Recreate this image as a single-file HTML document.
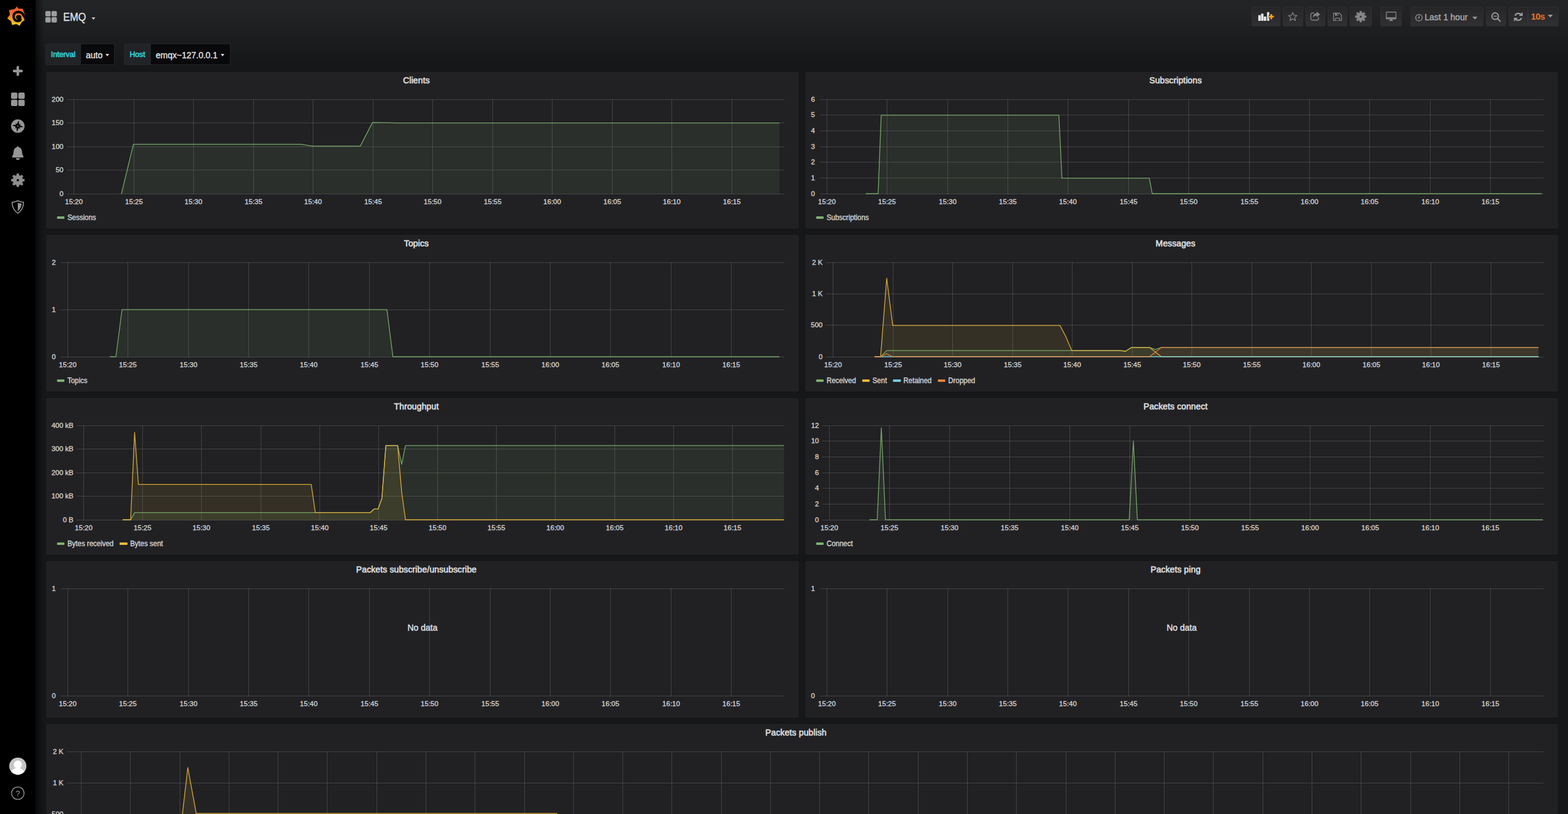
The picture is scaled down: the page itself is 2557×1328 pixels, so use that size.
<!DOCTYPE html>
<html lang="en"><head><meta charset="utf-8"><title>Grafana - EMQ</title>
<style>
*{box-sizing:border-box}
html,body{margin:0;padding:0}
body{width:2557px;height:1328px;overflow:hidden;position:relative;background:#161719;background-image:linear-gradient(180deg,#232426 0px,#222426 8px,#161719 105px);background-repeat:no-repeat;font-family:"Liberation Sans",sans-serif;color:#d8d9da;font-size:13px}
.sidemenu{position:absolute;left:0;top:0;width:58px;height:1328px;background:#000}
.sidemenu svg{position:absolute}
.shadow{position:absolute;left:58px;top:0;width:14px;height:1328px;background:linear-gradient(90deg,rgba(0,0,0,.55),rgba(0,0,0,0))}
.navt{-webkit-text-stroke:.3px #e3e3e3;position:absolute;left:103px;top:14.5px;font-size:18px;line-height:26px;color:#e3e3e3;transform:scaleX(.91);transform-origin:0 0;white-space:nowrap}
.nbtn{position:absolute;top:11px;height:32px;border:1px solid #2f2f32;border-radius:2px;background:linear-gradient(180deg,#262628,#303032);color:#9a9a9a}
.nbtn svg{position:absolute}
.nbtn span{position:absolute;white-space:nowrap;font-size:14px;line-height:16px}
.vlab{position:absolute;top:71px;height:35px;padding-top:1px;background:#212327;box-shadow:inset 0 0 0 1px #26272b;border-radius:3px 0 0 3px;color:#32d1df;-webkit-text-stroke:.6px #32d1df;font-size:12.5px;line-height:35px;letter-spacing:-.15px;text-align:center;white-space:nowrap}
.vval{-webkit-text-stroke:.35px #e3e3e3;position:absolute;top:71px;height:35px;padding-top:1px;background:#09090b;border:1px solid #262628;border-left-width:0;border-radius:0 3px 3px 0;color:#e3e3e3;font-size:14px;line-height:35px;padding-left:8px;white-space:nowrap}
.caret{display:inline-block;width:0;height:0;border-left:3.8px solid transparent;border-right:3.8px solid transparent;border-top:4px solid #d8d9da;vertical-align:middle;margin-left:5px;position:relative;top:-1px}
.panel{position:absolute;background:#212124;border-radius:2px;overflow:hidden;box-shadow:0 0 0 1px #131314}
.ptitle{position:absolute;top:5.6px;transform:translateX(-50%);font-size:14px;line-height:16px;color:#dcdddf;-webkit-text-stroke:.65px #dcdddf;letter-spacing:.12px;white-space:nowrap}
.chart{position:absolute;left:0;top:0}
.grid{stroke:rgba(200,200,200,.2);stroke-width:1;fill:none}
.ax text{font-family:"Liberation Sans",sans-serif;font-size:11.5px;fill:#d8d9da;stroke:#d8d9da;stroke-width:.3px}
.nodata{font-family:"Liberation Sans",sans-serif;font-size:14px;fill:#dedfe0;stroke:#dedfe0;stroke-width:.45px}
.legend{position:absolute;left:18px;top:229.5px;height:16px;white-space:nowrap;font-size:12.4px;-webkit-text-stroke:.33px #d8d9da;line-height:16px;color:#d8d9da;transform:scaleX(.927);transform-origin:0 0}
.li{display:inline-block;margin-right:10.8px}
.li i{display:inline-block;width:13.4px;height:3.4px;border-radius:1px;vertical-align:middle;margin-right:4.85px;position:relative;top:-.4px}

</style></head>
<body>
<div class="sidemenu">
<svg style="left:5px;top:5px" width="48" height="45" viewBox="0 0 1417 1328"><defs><linearGradient id="lg" x1="0" y1="170" x2="0" y2="1095" gradientUnits="userSpaceOnUse"><stop offset="0" stop-color="#f05a28"/><stop offset=".35" stop-color="#f26a2c"/><stop offset="1" stop-color="#fdd420"/></linearGradient></defs>
<path fill="url(#lg)" d="M660 172L748 272L938 266Q1010 420 1058 600L990 640L1000 720L1038 822L880 940L800 1092L640 1012L428 1052L392 880L198 740L330 560L284 338L560 290Z"/>
<ellipse cx="752" cy="688" rx="127" ry="113" fill="#000"/>
<path fill="none" stroke="#000" stroke-width="116" d="M815 750C880 815 800 862 700 862C570 860 505 750 508 630C512 500 610 428 740 428C870 428 955 505 990 612L1070 690"/>
</svg>
<svg style="left:18px;top:105px" width="22" height="22" viewBox="18 105 22 22"><path fill="none" stroke="#969696" stroke-width="4.2" stroke-linecap="round" d="M22.9 115.85H35.2M29.05 109.7V122"/></svg>
<svg style="left:17px;top:150px" width="24" height="24" viewBox="17 150 24 24"><g fill="#969696"><rect x="18" y="151" width="10.4" height="10.3" rx="2.2"/><rect x="29.9" y="151" width="10.4" height="10.3" rx="2.2"/><rect x="18" y="162.7" width="10.4" height="10.3" rx="2.2"/><rect x="29.9" y="162.7" width="10.4" height="10.3" rx="2.2"/></g></svg>
<svg style="left:17px;top:194px" width="24" height="24" viewBox="17 194 24 24"><circle cx="29.05" cy="205.7" r="11" fill="#969696"/><polygon fill="#000" points="30.39,196.19 31.37,203.95 38.56,207.04 30.80,208.02 27.71,215.21 26.73,207.45 19.54,204.36 27.30,203.38"/><polygon fill="#000" points="34.08,201.91 31.03,205.98 32.84,210.73 28.77,207.68 24.02,209.49 27.07,205.42 25.26,200.67 29.33,203.72"/><circle cx="29.05" cy="205.7" r="1" fill="#969696"/></svg>
<svg style="left:18px;top:237px" width="22" height="26" viewBox="18 237 22 26"><path fill="#969696" d="M29.05 238.700C30 238.700 30.400 239.300 30.500 240.100C33.600 240.900 35.600 243.500 35.900 247.100C36.100 250.500 36.300 252.500 37.900 254.300C38.500 255 38.300 256.900 37.200 256.900H20.900C19.800 256.900 19.600 255 20.200 254.300C21.800 252.500 22 250.500 22.200 247.100C22.500 243.500 24.500 240.900 27.600 240.100C27.700 239.300 28.100 238.700 29.050 238.700ZM25.800 258.100h6.500c0 1.700-1.400 2.900-3.250 2.900s-3.250-1.200-3.250-2.900z"/></svg>
<svg style="left:17px;top:282px" width="24" height="24" viewBox="17 282 24 24"><path fill="#8e8e8e" fill-rule="evenodd" stroke="#8e8e8e" stroke-width=".8" stroke-linejoin="round" d="M27.15 286.33L27.48 283.42L30.62 283.42L30.95 286.33L33.12 287.23L35.42 285.41L37.64 287.63L35.82 289.93L36.72 292.10L39.63 292.43L39.63 295.57L36.72 295.90L35.82 298.07L37.64 300.37L35.42 302.59L33.12 300.77L30.95 301.67L30.62 304.58L27.48 304.58L27.15 301.67L24.98 300.77L22.68 302.59L20.46 300.37L22.28 298.07L21.38 295.90L18.47 295.57L18.47 292.43L21.38 292.10L22.28 289.93L20.46 287.63L22.68 285.41L24.98 287.23ZM26.75 294.00a2.30 2.30 0 1 0 4.60 0a2.30 2.30 0 1 0 -4.60 0Z"/></svg>
<svg style="left:17px;top:325px" width="24" height="26" viewBox="17 325 24 26"><path fill="none" stroke="#969696" stroke-width="1.5" stroke-linejoin="round" d="M29.05 327.5c-3 1.500-6.200 2.300-9.400 2.500c.2 8 3.800 14.200 9.400 17.900c5.600-3.700 9.200-9.900 9.400-17.900c-3.200-.2-6.400-1-9.400-2.500z"/><path fill="#969696" d="M29.05 330.800c2 .8 4.100 1.300 6.300 1.500c-.5 5.300-2.700 9.500-6.300 12.500z"/></svg>
<svg style="left:14px;top:1235px" width="30" height="30" viewBox="14 1235 30 30"><defs><clipPath id="av"><circle cx="29.05" cy="1249.9" r="14"/></clipPath></defs><circle cx="29.05" cy="1249.900" r="14" fill="#c6c6c6"/><g clip-path="url(#av)" fill="#fff"><circle cx="29.050" cy="1247.300" r="6.600"/><ellipse cx="29.05" cy="1263" rx="11.5" ry="10.2"/></g></svg>
<svg style="left:17px;top:1282px" width="24" height="24" viewBox="17 1282 24 24"><circle cx="29.05" cy="1294" r="10.2" fill="none" stroke="#969696" stroke-width="1.300"/><text x="29.05" y="1298.700" text-anchor="middle" font-family="Liberation Sans, sans-serif" font-size="13.500" fill="#969696">?</text></svg>
</div>
<div class="shadow"></div>
<svg style="position:absolute;left:74px;top:18px" width="19" height="19" viewBox="0 0 19 19"><g fill="#9d9d9d"><rect x="0" y="0" width="8.7" height="8.700" rx="1.800"/><rect x="10" y="0" width="8.700" height="8.700" rx="1.800"/><rect x="0" y="10" width="8.700" height="8.700" rx="1.800"/><rect x="10" y="10" width="8.700" height="8.700" rx="1.800"/></g></svg>
<div class="navt">EMQ</div>
<svg style="position:absolute;left:149px;top:28px" width="7" height="5" viewBox="0 0 7 5"><path fill="#d8d9da" d="M.3.600h6.200L3.400 4.100z"/></svg>
<div class="vlab" style="left:74px;width:58px">Interval</div><div class="vval" style="left:132px;width:54.500px">auto<i class="caret"></i></div>
<div class="vlab" style="left:202px;width:44px">Host</div><div class="vval" style="left:246px;width:129.500px">emqx~127.0.0.1<i class="caret"></i></div>
<div class="nbtn" style="left:2041px;width:47px"><svg style="left:-1px;top:-1px" width="47" height="32" viewBox="2041 11 47 32"><g fill="#e6e6e6"><rect x="2051.900" y="24.800" width="4" height="9.100" rx=".5"/><rect x="2056.400" y="22.200" width="4" height="11.700" rx=".5"/><rect x="2060.900" y="26.900" width="4" height="7" rx=".5"/><rect x="2066.200" y="19.700" width="3.700" height="14.200" rx=".5"/></g><path fill="none" stroke="#262628" stroke-width="4.800" d="M2068.700 27.200h8.800M2073.100 22.800v8.800"/><path fill="none" stroke="#f6a01a" stroke-width="2.800" d="M2068.900 27.200h8.400M2073.100 23v8.400"/></svg></div>
<div class="nbtn" style="left:2092px;width:33px"><svg style="left:-1px;top:-1px" width="33" height="32" viewBox="2092 11 33 32"><polygon fill="none" stroke="#858585" stroke-width="1.250" stroke-linejoin="round" points="2108.10,20.30 2110.04,24.93 2115.04,25.34 2111.24,28.62 2112.39,33.51 2108.10,30.90 2103.81,33.51 2104.96,28.62 2101.16,25.34 2106.16,24.93"/></svg></div>
<div class="nbtn" style="left:2129px;width:32px"><svg style="left:-1px;top:-1px" width="32" height="32" viewBox="2129 11 32 32"><path fill="none" stroke="#858585" stroke-width="1.400" stroke-linecap="round" d="M2142.500 21.300h-2.300a2.600 2.600 0 0 0-2.600 2.600v6.300a2.600 2.600 0 0 0 2.600 2.600h7.300a2.600 2.600 0 0 0 2.600-2.600v-2"/><path fill="#858585" d="M2147.200 19l5.600 4.500l-5.600 4.500v-2.600c-3.300 0-5 1.200-6 3.800c-.3-4.300 1.700-7.300 6-7.600z"/></svg></div>
<div class="nbtn" style="left:2165px;width:32px"><svg style="left:-1px;top:-1px" width="32" height="32" viewBox="2165 11 32 32"><path fill="none" stroke="#858585" stroke-width="1.300" stroke-linejoin="round" d="M2174.700 21.300h9.300l3.500 3.500v8.600h-12.800z"/><path fill="#858585" d="M2177 21.300h5.600v4.300h-5.600zM2177.300 29h7.600v4.400h-7.600z"/><rect x="2180.400" y="22" width="1.400" height="2.800" fill="#2b2b2d"/><rect x="2178.500" y="30.200" width="5.200" height="3.200" fill="#2b2b2d"/></svg></div>
<div class="nbtn" style="left:2201px;width:36px"><svg style="left:-1px;top:-1px" width="36" height="32" viewBox="2201 11 36 32"><path fill="#858585" fill-rule="evenodd" stroke="#858585" stroke-width=".8" stroke-linejoin="round" d="M2217.43 20.84L2217.69 18.35L2220.31 18.35L2220.57 20.84L2222.35 21.58L2224.30 20.00L2226.15 21.85L2224.57 23.80L2225.31 25.58L2227.80 25.84L2227.80 28.46L2225.31 28.72L2224.57 30.50L2226.15 32.45L2224.30 34.30L2222.35 32.72L2220.57 33.46L2220.31 35.95L2217.69 35.95L2217.43 33.46L2215.65 32.72L2213.70 34.30L2211.85 32.45L2213.43 30.50L2212.69 28.72L2210.20 28.46L2210.20 25.84L2212.69 25.58L2213.43 23.80L2211.85 21.85L2213.70 20.00L2215.65 21.58ZM2217.10 27.15a1.90 1.90 0 1 0 3.80 0a1.90 1.90 0 1 0 -3.80 0Z"/></svg></div>
<div class="nbtn" style="left:2251px;width:35px"><svg style="left:-1px;top:-1px" width="35" height="32" viewBox="2251 11 35 32"><path fill="#858585" fill-rule="evenodd" d="M2261.500 19h14.100a1.500 1.500 0 0 1 1.500 1.500v9.600a1.500 1.500 0 0 1-1.500 1.500h-14.100a1.500 1.500 0 0 1-1.500-1.500v-9.600a1.500 1.500 0 0 1 1.500-1.500zM2261.300 20.400v7.900h14.500v-7.900zM2266.800 31.600h3.600l.6 1.700h1v.9h-6.800v-.9h1z"/></svg></div>
<div class="nbtn" style="left:2300px;width:119px"><svg style="left:-1px;top:-1px" width="119" height="32" viewBox="2300 11 119 32"><circle cx="2313.900" cy="28.900" r="5.300" fill="none" stroke="#9a9a9a" stroke-width="1.300"/><path fill="none" stroke="#9a9a9a" stroke-width="1.200" d="M2314.300 25.500v3.800h-2.700"/><text x="2323.300" y="33.100" font-family="Liberation Sans, sans-serif" font-size="14" fill="#abadb0" stroke="#abadb0" stroke-width=".35">Last 1 hour</text><path fill="#9a9a9a" d="M2401 27.300h8.400l-4.200 4.500z"/></svg></div>
<div class="nbtn" style="left:2423px;width:33px"><svg style="left:-1px;top:-1px" width="33" height="32" viewBox="2423 11 33 32"><circle cx="2438.200" cy="26.400" r="5.300" fill="none" stroke="#9a9a9a" stroke-width="2"/><path fill="none" stroke="#9a9a9a" stroke-width="2.200" stroke-linecap="round" d="M2442.300 30.500l4 4"/><path stroke="#9a9a9a" stroke-width="1.400" d="M2435.600 26.400h5.200"/></svg></div>
<div class="nbtn" style="left:2460px;width:82px"><svg style="left:-1px;top:-1px" width="82" height="32" viewBox="2460 11 82 32"><path fill="none" stroke="#9a9a9a" stroke-width="2.300" d="M2470.74 25.58A5.6 5.6 0 0 1 2481.08 25.13M2481.26 29.42A5.6 5.6 0 0 1 2470.92 29.87"/><path fill="#9a9a9a" d="M2483.100 19.800v6.300h-6.300zM2468.900 35.200v-6.300h6.300z"/><path stroke="#39393b" stroke-width="1" d="M2491.500 11v32"/><text x="2496.400" y="32.200" font-family="Liberation Sans, sans-serif" font-size="14.500" font-weight="bold" letter-spacing="-.5" fill="#ec7220">10s</text><path fill="#9a9a9a" d="M2524 24.100h8.200l-4.100 4.300z"/></svg></div>
<div class="panel" style="left:75px;top:117px;width:1228px;height:256px">
<div class="ptitle" style="left:604px">Clients</div>
<svg class="chart" width="1228" height="256" viewBox="75 117 1228 256">
<path class="grid" d="M109 316.5H1279M109 277.5H1279M109 239.5H1279M109 200.5H1279M109 162.5H1279M120.5 162V317M218.5 162V317M315.5 162V317M413.5 162V317M510.5 162V317M608.5 162V317M705.5 162V317M803.5 162V317M900.5 162V317M998.5 162V317M1095.5 162V317M1193.5 162V317"/>
<polygon fill="#7eb26d" fill-opacity=".1" points="198.00,316.50 217.50,235.40 490.50,235.40 510.00,238.40 587.50,238.40 607.50,199.90 628.00,200.20 647.50,200.70 1271.00,200.70 1271.00,316.50 198.00,316.50"/>
<polyline fill="none" stroke="#7eb26d" stroke-width="1.3" stroke-opacity=".9" stroke-linejoin="round" points="198.00,316.50 217.50,235.40 490.50,235.40 510.00,238.40 587.50,238.40 607.50,199.90 628.00,200.20 647.50,200.70 1271.00,200.70"/>
<g class="ax" text-anchor="end">
<text x="103.5" y="319.5">0</text>
<text x="103.5" y="281">50</text>
<text x="103.5" y="242.5">100</text>
<text x="103.5" y="204">150</text>
<text x="103.5" y="165.5">200</text>
</g>
<g class="ax" text-anchor="middle">
<text x="120.5" y="332.5">15:20</text>
<text x="218.5" y="332.5">15:25</text>
<text x="315.5" y="332.5">15:30</text>
<text x="413.5" y="332.5">15:35</text>
<text x="510.5" y="332.5">15:40</text>
<text x="608.5" y="332.5">15:45</text>
<text x="705.5" y="332.5">15:50</text>
<text x="803.5" y="332.5">15:55</text>
<text x="900.5" y="332.5">16:00</text>
<text x="998.5" y="332.5">16:05</text>
<text x="1095.5" y="332.5">16:10</text>
<text x="1193.5" y="332.5">16:15</text>
</g>
</svg>
<div class="legend"><span class="li"><i style="background:#7eb26d"></i>Sessions</span></div>
</div>
<div class="panel" style="left:1313px;top:117px;width:1228px;height:256px">
<div class="ptitle" style="left:604px">Subscriptions</div>
<svg class="chart" width="1228" height="256" viewBox="1313 117 1228 256">
<path class="grid" d="M1337 316.5H2517M1337 290.5H2517M1337 264.5H2517M1337 239.5H2517M1337 213.5H2517M1337 187.5H2517M1337 162.5H2517M1348.5 162V317M1446.5 162V317M1545.5 162V317M1643.5 162V317M1741.5 162V317M1840.5 162V317M1938.5 162V317M2037.5 162V317M2135.5 162V317M2233.5 162V317M2332.5 162V317M2430.5 162V317"/>
<polygon fill="#7eb26d" fill-opacity=".1" points="1412.00,316.00 1432.00,316.00 1437.00,187.90 1726.75,187.90 1731.75,290.60 1874.25,290.60 1879.00,316.00 2514.00,316.00 2514.00,316.50 1412.00,316.50"/>
<polyline fill="none" stroke="#7eb26d" stroke-width="1.3" stroke-opacity=".9" stroke-linejoin="round" points="1412.00,316.00 1432.00,316.00 1437.00,187.90 1726.75,187.90 1731.75,290.60 1874.25,290.60 1879.00,316.00 2514.00,316.00"/>
<g class="ax" text-anchor="end">
<text x="1328.9" y="319.5">0</text>
<text x="1328.9" y="293.833">1</text>
<text x="1328.9" y="268.167">2</text>
<text x="1328.9" y="242.5">3</text>
<text x="1328.9" y="216.833">4</text>
<text x="1328.9" y="191.167">5</text>
<text x="1328.9" y="165.5">6</text>
</g>
<g class="ax" text-anchor="middle">
<text x="1348.5" y="332.5">15:20</text>
<text x="1446.5" y="332.5">15:25</text>
<text x="1545.5" y="332.5">15:30</text>
<text x="1643.5" y="332.5">15:35</text>
<text x="1741.5" y="332.5">15:40</text>
<text x="1840.5" y="332.5">15:45</text>
<text x="1938.5" y="332.5">15:50</text>
<text x="2037.5" y="332.5">15:55</text>
<text x="2135.5" y="332.5">16:00</text>
<text x="2233.5" y="332.5">16:05</text>
<text x="2332.5" y="332.5">16:10</text>
<text x="2430.5" y="332.5">16:15</text>
</g>
</svg>
<div class="legend"><span class="li"><i style="background:#7eb26d"></i>Subscriptions</span></div>
</div>
<div class="panel" style="left:75px;top:383px;width:1228px;height:256px">
<div class="ptitle" style="left:604px">Topics</div>
<svg class="chart" width="1228" height="256" viewBox="75 383 1228 256">
<path class="grid" d="M99 582.5H1279M99 505.5H1279M99 428.5H1279M110.5 428V583M208.5 428V583M307.5 428V583M405.5 428V583M503.5 428V583M602.5 428V583M700.5 428V583M799.5 428V583M897.5 428V583M995.5 428V583M1094.5 428V583M1192.5 428V583"/>
<polygon fill="#7eb26d" fill-opacity=".1" points="179.00,582.00 189.00,582.00 199.00,505.20 631.00,505.20 640.75,582.00 1271.00,582.00 1271.00,582.50 179.00,582.50"/>
<polyline fill="none" stroke="#7eb26d" stroke-width="1.3" stroke-opacity=".9" stroke-linejoin="round" points="179.00,582.00 189.00,582.00 199.00,505.20 631.00,505.20 640.75,582.00 1271.00,582.00"/>
<g class="ax" text-anchor="end">
<text x="90.9" y="585.5">0</text>
<text x="90.9" y="508.5">1</text>
<text x="90.9" y="431.5">2</text>
</g>
<g class="ax" text-anchor="middle">
<text x="110.5" y="598.5">15:20</text>
<text x="208.5" y="598.5">15:25</text>
<text x="307.5" y="598.5">15:30</text>
<text x="405.5" y="598.5">15:35</text>
<text x="503.5" y="598.5">15:40</text>
<text x="602.5" y="598.5">15:45</text>
<text x="700.5" y="598.5">15:50</text>
<text x="799.5" y="598.5">15:55</text>
<text x="897.5" y="598.5">16:00</text>
<text x="995.5" y="598.5">16:05</text>
<text x="1094.5" y="598.5">16:10</text>
<text x="1192.5" y="598.5">16:15</text>
</g>
</svg>
<div class="legend"><span class="li"><i style="background:#7eb26d"></i>Topics</span></div>
</div>
<div class="panel" style="left:1313px;top:383px;width:1228px;height:256px">
<div class="ptitle" style="left:604px">Messages</div>
<svg class="chart" width="1228" height="256" viewBox="1313 383 1228 256">
<path class="grid" d="M1347 582.5H2517M1347 530.5H2517M1347 479.5H2517M1347 428.5H2517M1358.5 428V583M1456.5 428V583M1553.5 428V583M1651.5 428V583M1748.5 428V583M1846.5 428V583M1943.5 428V583M2041.5 428V583M2138.5 428V583M2236.5 428V583M2333.5 428V583M2431.5 428V583"/>
<polygon fill="#7eb26d" fill-opacity=".1" points="1426.00,582.00 1436.00,582.00 1446.00,571.90 1826.00,571.90 1835.50,573.00 1845.25,566.80 1874.50,566.80 1884.00,570.20 1894.00,566.80 2509.00,566.80 2509.00,582.50 1426.00,582.50"/>
<polygon fill="#eab839" fill-opacity=".1" points="1426.00,582.00 1436.00,582.00 1446.00,454.00 1455.75,530.90 1728.50,530.90 1738.00,549.00 1747.75,571.90 1826.00,571.90 1835.50,573.00 1845.25,566.80 1874.50,566.80 1894.00,582.00 2509.00,582.00 2509.00,582.50 1426.00,582.50"/>
<polygon fill="#6ed0e0" fill-opacity=".1" points="1426.00,582.00 2509.00,582.00 2509.00,582.50 1426.00,582.50"/>
<polygon fill="#ef843c" fill-opacity=".1" points="1426.00,582.00 1436.00,582.00 1446.00,577.00 1455.75,582.00 1874.50,582.00 1894.00,566.80 2509.00,566.80 2509.00,582.50 1426.00,582.50"/>
<polyline fill="none" stroke="#7eb26d" stroke-width="1.3" stroke-opacity=".9" stroke-linejoin="round" points="1426.00,582.00 1436.00,582.00 1446.00,571.90 1826.00,571.90 1835.50,573.00 1845.25,566.80 1874.50,566.80 1884.00,570.20 1894.00,566.80 2509.00,566.80"/>
<polyline fill="none" stroke="#eab839" stroke-width="1.3" stroke-opacity=".9" stroke-linejoin="round" points="1426.00,582.00 1436.00,582.00 1446.00,454.00 1455.75,530.90 1728.50,530.90 1738.00,549.00 1747.75,571.90 1826.00,571.90 1835.50,573.00 1845.25,566.80 1874.50,566.80 1894.00,582.00 2509.00,582.00"/>
<polyline fill="none" stroke="#6ed0e0" stroke-width="1.3" stroke-opacity=".9" stroke-linejoin="round" points="1426.00,582.00 2509.00,582.00"/>
<polyline fill="none" stroke="#ef843c" stroke-width="1.3" stroke-opacity=".9" stroke-linejoin="round" points="1426.00,582.00 1436.00,582.00 1446.00,577.00 1455.75,582.00 1874.50,582.00 1894.00,566.80 2509.00,566.80"/>
<g class="ax" text-anchor="end">
<text x="1341.5" y="585.5">0</text>
<text x="1341.5" y="534.167">500</text>
<text x="1341.5" y="482.833">1 K</text>
<text x="1341.5" y="431.5">2 K</text>
</g>
<g class="ax" text-anchor="middle">
<text x="1358.5" y="598.5">15:20</text>
<text x="1456.5" y="598.5">15:25</text>
<text x="1553.5" y="598.5">15:30</text>
<text x="1651.5" y="598.5">15:35</text>
<text x="1748.5" y="598.5">15:40</text>
<text x="1846.5" y="598.5">15:45</text>
<text x="1943.5" y="598.5">15:50</text>
<text x="2041.5" y="598.5">15:55</text>
<text x="2138.5" y="598.5">16:00</text>
<text x="2236.5" y="598.5">16:05</text>
<text x="2333.5" y="598.5">16:10</text>
<text x="2431.5" y="598.5">16:15</text>
</g>
</svg>
<div class="legend"><span class="li"><i style="background:#7eb26d"></i>Received</span><span class="li"><i style="background:#eab839"></i>Sent</span><span class="li"><i style="background:#6ed0e0"></i>Retained</span><span class="li"><i style="background:#ef843c"></i>Dropped</span></div>
</div>
<div class="panel" style="left:75px;top:649px;width:1228px;height:256px">
<div class="ptitle" style="left:604px">Throughput</div>
<svg class="chart" width="1228" height="256" viewBox="75 649 1228 256">
<path class="grid" d="M125 848.5H1279M125 809.5H1279M125 771.5H1279M125 732.5H1279M125 694.5H1279M136.5 694V849M232.5 694V849M328.5 694V849M425.5 694V849M521.5 694V849M617.5 694V849M713.5 694V849M809.5 694V849M905.5 694V849M1002.5 694V849M1098.5 694V849M1194.5 694V849"/>
<polygon fill="#7eb26d" fill-opacity=".1" points="200.00,848.00 213.00,848.00 219.50,836.40 603.50,836.40 610.00,830.40 616.50,830.40 622.75,813.00 629.25,726.90 648.50,726.90 655.00,757.50 661.25,726.90 1278.40,726.90 1278.40,848.50 200.00,848.50"/>
<polygon fill="#eab839" fill-opacity=".1" points="200.00,848.00 213.00,848.00 219.50,705.50 225.75,790.40 507.50,790.40 514.25,836.40 603.50,836.40 610.00,830.40 616.50,830.40 622.75,813.00 629.25,726.90 648.50,726.90 655.00,802.50 661.25,848.00 1278.40,848.00 1278.40,848.50 200.00,848.50"/>
<polyline fill="none" stroke="#7eb26d" stroke-width="1.3" stroke-opacity=".9" stroke-linejoin="round" points="200.00,848.00 213.00,848.00 219.50,836.40 603.50,836.40 610.00,830.40 616.50,830.40 622.75,813.00 629.25,726.90 648.50,726.90 655.00,757.50 661.25,726.90 1278.40,726.90"/>
<polyline fill="none" stroke="#eab839" stroke-width="1.3" stroke-opacity=".9" stroke-linejoin="round" points="200.00,848.00 213.00,848.00 219.50,705.50 225.75,790.40 507.50,790.40 514.25,836.40 603.50,836.40 610.00,830.40 616.50,830.40 622.75,813.00 629.25,726.90 648.50,726.90 655.00,802.50 661.25,848.00 1278.40,848.00"/>
<g class="ax" text-anchor="end">
<text x="119.75" y="851.5">0 B</text>
<text x="119.75" y="813">100 kB</text>
<text x="119.75" y="774.5">200 kB</text>
<text x="119.75" y="736">300 kB</text>
<text x="119.75" y="697.5">400 kB</text>
</g>
<g class="ax" text-anchor="middle">
<text x="136.5" y="864.5">15:20</text>
<text x="232.5" y="864.5">15:25</text>
<text x="328.5" y="864.5">15:30</text>
<text x="425.5" y="864.5">15:35</text>
<text x="521.5" y="864.5">15:40</text>
<text x="617.5" y="864.5">15:45</text>
<text x="713.5" y="864.5">15:50</text>
<text x="809.5" y="864.5">15:55</text>
<text x="905.5" y="864.5">16:00</text>
<text x="1002.5" y="864.5">16:05</text>
<text x="1098.5" y="864.5">16:10</text>
<text x="1194.5" y="864.5">16:15</text>
</g>
</svg>
<div class="legend"><span class="li"><i style="background:#7eb26d"></i>Bytes received</span><span class="li"><i style="background:#eab839"></i>Bytes sent</span></div>
</div>
<div class="panel" style="left:1313px;top:649px;width:1228px;height:256px">
<div class="ptitle" style="left:604px">Packets connect</div>
<svg class="chart" width="1228" height="256" viewBox="1313 649 1228 256">
<path class="grid" d="M1341 848.5H2517M1341 822.5H2517M1341 796.5H2517M1341 771.5H2517M1341 745.5H2517M1341 719.5H2517M1341 694.5H2517M1352.5 694V849M1450.5 694V849M1548.5 694V849M1646.5 694V849M1744.5 694V849M1842.5 694V849M1940.5 694V849M2038.5 694V849M2136.5 694V849M2234.5 694V849M2332.5 694V849M2430.5 694V849"/>
<polygon fill="#7eb26d" fill-opacity=".1" points="1418.00,848.00 1430.50,848.00 1437.25,698.00 1444.00,848.00 1841.50,848.00 1848.25,719.50 1854.75,848.00 2516.00,848.00 2516.00,848.50 1418.00,848.50"/>
<polyline fill="none" stroke="#7eb26d" stroke-width="1.3" stroke-opacity=".9" stroke-linejoin="round" points="1418.00,848.00 1430.50,848.00 1437.25,698.00 1444.00,848.00 1841.50,848.00 1848.25,719.50 1854.75,848.00 2516.00,848.00"/>
<g class="ax" text-anchor="end">
<text x="1335.5" y="851.5">0</text>
<text x="1335.5" y="825.833">2</text>
<text x="1335.5" y="800.167">4</text>
<text x="1335.5" y="774.5">6</text>
<text x="1335.5" y="748.833">8</text>
<text x="1335.5" y="723.167">10</text>
<text x="1335.5" y="697.5">12</text>
</g>
<g class="ax" text-anchor="middle">
<text x="1352.5" y="864.5">15:20</text>
<text x="1450.5" y="864.5">15:25</text>
<text x="1548.5" y="864.5">15:30</text>
<text x="1646.5" y="864.5">15:35</text>
<text x="1744.5" y="864.5">15:40</text>
<text x="1842.5" y="864.5">15:45</text>
<text x="1940.5" y="864.5">15:50</text>
<text x="2038.5" y="864.5">15:55</text>
<text x="2136.5" y="864.5">16:00</text>
<text x="2234.5" y="864.5">16:05</text>
<text x="2332.5" y="864.5">16:10</text>
<text x="2430.5" y="864.5">16:15</text>
</g>
</svg>
<div class="legend"><span class="li"><i style="background:#7eb26d"></i>Connect</span></div>
</div>
<div class="panel" style="left:75px;top:915px;width:1228px;height:256px">
<div class="ptitle" style="left:604px">Packets subscribe/unsubscribe</div>
<svg class="chart" width="1228" height="256" viewBox="75 915 1228 256">
<path class="grid" d="M99 1135.5H1279M99 960.5H1279M110.5 960V1136M208.5 960V1136M307.5 960V1136M405.5 960V1136M503.5 960V1136M602.5 960V1136M700.5 960V1136M799.5 960V1136M897.5 960V1136M995.5 960V1136M1094.5 960V1136M1192.5 960V1136"/>
<g class="ax" text-anchor="end">
<text x="90.9" y="1138.5">0</text>
<text x="90.9" y="963.5">1</text>
</g>
<g class="ax" text-anchor="middle">
<text x="110.5" y="1151.5">15:20</text>
<text x="208.5" y="1151.5">15:25</text>
<text x="307.5" y="1151.5">15:30</text>
<text x="405.5" y="1151.5">15:35</text>
<text x="503.5" y="1151.5">15:40</text>
<text x="602.5" y="1151.5">15:45</text>
<text x="700.5" y="1151.5">15:50</text>
<text x="799.5" y="1151.5">15:55</text>
<text x="897.5" y="1151.5">16:00</text>
<text x="995.5" y="1151.5">16:05</text>
<text x="1094.5" y="1151.5">16:10</text>
<text x="1192.5" y="1151.5">16:15</text>
</g>
<text class="nodata" text-anchor="middle" x="689" y="1028.8">No data</text>
</svg>
</div>
<div class="panel" style="left:1313px;top:915px;width:1228px;height:256px">
<div class="ptitle" style="left:604px">Packets ping</div>
<svg class="chart" width="1228" height="256" viewBox="1313 915 1228 256">
<path class="grid" d="M1337 1135.5H2517M1337 960.5H2517M1348.5 960V1136M1446.5 960V1136M1545.5 960V1136M1643.5 960V1136M1741.5 960V1136M1840.5 960V1136M1938.5 960V1136M2037.5 960V1136M2135.5 960V1136M2233.5 960V1136M2332.5 960V1136M2430.5 960V1136"/>
<g class="ax" text-anchor="end">
<text x="1328.9" y="1138.5">0</text>
<text x="1328.9" y="963.5">1</text>
</g>
<g class="ax" text-anchor="middle">
<text x="1348.5" y="1151.5">15:20</text>
<text x="1446.5" y="1151.5">15:25</text>
<text x="1545.5" y="1151.5">15:30</text>
<text x="1643.5" y="1151.5">15:35</text>
<text x="1741.5" y="1151.5">15:40</text>
<text x="1840.5" y="1151.5">15:45</text>
<text x="1938.5" y="1151.5">15:50</text>
<text x="2037.5" y="1151.5">15:55</text>
<text x="2135.5" y="1151.5">16:00</text>
<text x="2233.5" y="1151.5">16:05</text>
<text x="2332.5" y="1151.5">16:10</text>
<text x="2430.5" y="1151.5">16:15</text>
</g>
<text class="nodata" text-anchor="middle" x="1927" y="1028.8">No data</text>
</svg>
</div>
<div class="panel" style="left:75px;top:1181px;width:2466px;height:147px">
<div class="ptitle" style="left:1223px">Packets publish</div>
<svg class="chart" width="2466" height="147" viewBox="75 1181 2466 147">
<path class="grid" d="M109 1380.5H2517M109 1328.5H2517M109 1277.5H2517M109 1226.5H2517M132.5 1226V1381M212.5 1226V1381M293.5 1226V1381M373.5 1226V1381M453.5 1226V1381M533.5 1226V1381M614.5 1226V1381M694.5 1226V1381M774.5 1226V1381M855.5 1226V1381M935.5 1226V1381M1015.5 1226V1381M1095.5 1226V1381M1176.5 1226V1381M1256.5 1226V1381M1336.5 1226V1381M1416.5 1226V1381M1497.5 1226V1381M1577.5 1226V1381M1657.5 1226V1381M1738.5 1226V1381M1818.5 1226V1381M1898.5 1226V1381M1978.5 1226V1381M2059.5 1226V1381M2139.5 1226V1381M2219.5 1226V1381M2300.5 1226V1381M2380.5 1226V1381M2460.5 1226V1381"/>
<polygon fill="#eab839" fill-opacity=".1" points="280.00,1380.00 291.50,1380.00 306.25,1252.25 320.00,1327.20 908.00,1327.20 915.00,1380.00 2508.00,1380.00 2508.00,1380.50 280.00,1380.50"/>
<polyline fill="none" stroke="#eab839" stroke-width="1.3" stroke-opacity=".9" stroke-linejoin="round" points="280.00,1380.00 291.50,1380.00 306.25,1252.25 320.00,1327.20 908.00,1327.20 915.00,1380.00 2508.00,1380.00"/>
<g class="ax" text-anchor="end">
<text x="103.5" y="1383.5">0</text>
<text x="103.5" y="1332.17">500</text>
<text x="103.5" y="1280.83">1 K</text>
<text x="103.5" y="1229.5">2 K</text>
</g>
<g class="ax" text-anchor="middle">
<text x="132.5" y="1396.5">15:20</text>
<text x="212.5" y="1396.5">15:22</text>
<text x="293.5" y="1396.5">15:24</text>
<text x="373.5" y="1396.5">15:26</text>
<text x="453.5" y="1396.5">15:28</text>
<text x="533.5" y="1396.5">15:30</text>
<text x="614.5" y="1396.5">15:32</text>
<text x="694.5" y="1396.5">15:34</text>
<text x="774.5" y="1396.5">15:36</text>
<text x="855.5" y="1396.5">15:38</text>
<text x="935.5" y="1396.5">15:40</text>
<text x="1015.5" y="1396.5">15:42</text>
<text x="1095.5" y="1396.5">15:44</text>
<text x="1176.5" y="1396.5">15:46</text>
<text x="1256.5" y="1396.5">15:48</text>
<text x="1336.5" y="1396.5">15:50</text>
<text x="1416.5" y="1396.5">15:52</text>
<text x="1497.5" y="1396.5">15:54</text>
<text x="1577.5" y="1396.5">15:56</text>
<text x="1657.5" y="1396.5">15:58</text>
<text x="1738.5" y="1396.5">16:00</text>
<text x="1818.5" y="1396.5">16:02</text>
<text x="1898.5" y="1396.5">16:04</text>
<text x="1978.5" y="1396.5">16:06</text>
<text x="2059.5" y="1396.5">16:08</text>
<text x="2139.5" y="1396.5">16:10</text>
<text x="2219.5" y="1396.5">16:12</text>
<text x="2300.5" y="1396.5">16:14</text>
<text x="2380.5" y="1396.5">16:16</text>
<text x="2460.5" y="1396.5">16:18</text>
</g>
</svg>
</div>
</body></html>
